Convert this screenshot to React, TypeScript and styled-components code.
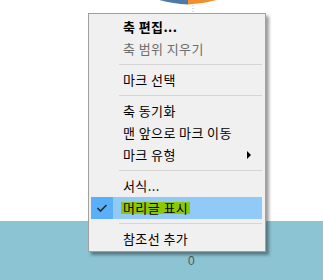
import React from "react";
import styled, { createGlobalStyle } from "styled-components";

const Global = createGlobalStyle`
  html, body { margin: 0; padding: 0; background: #ffffff; }
  body { font-family: "Noto Sans CJK KR", "Noto Sans", sans-serif; }
`;

const Page = styled.div`
  position: relative;
  width: 323px;
  height: 280px;
  overflow: hidden;
  display: flex;
  flex-direction: column;
`;

const ChartArea = styled.div`
  height: 221px;
  background: #ffffff;
`;

const Band = styled.div`
  flex: 1;
  background: #8cc4d3;
  padding: 33px 0 0 188px;
  font-family: "Liberation Sans", Arial, sans-serif;
  font-size: 12px;
  color: #555555;
  line-height: 14px;
`;

const Menu = styled.div`
  position: absolute;
  left: 88px;
  top: 13px;
  width: 178px;
  box-sizing: border-box;
  background: #f0f0f0;
  border: 1px solid #a0a0a0;
  padding: 2px 3px 1px 2px;
  box-shadow: 3px 3px 3px rgba(0, 0, 0, 0.38);
  display: flex;
  flex-direction: column;
`;

const Item = styled.div<{ $active?: boolean }>`
  height: 22px;
  display: flex;
  align-items: center;
  background: ${(p) => (p.$active ? "#91c9f7" : "transparent")};
`;

const CheckCell = styled.div<{ $active?: boolean }>`
  width: 22px;
  height: 22px;
  display: flex;
  align-items: center;
  justify-content: center;
  background: ${(p) => (p.$active ? "#5aaff9" : "transparent")};
`;

const Label = styled.span<{ $bold?: boolean; $disabled?: boolean; $mark?: boolean }>`
  margin-left: ${(p) => (p.$mark ? "8px" : "10px")};
  padding: ${(p) => (p.$mark ? "0 2px" : "0")};
  font-size: 13px;
  letter-spacing: 0.4px;
  line-height: 12px;
  height: 12px;
  display: inline-flex;
  align-items: center;
  white-space: nowrap;
  font-weight: ${(p) => (p.$bold ? 700 : 400)};
  color: ${(p) => (p.$disabled ? "#6d6d6d" : "#000000")};
  background: ${(p) => (p.$mark ? "#8fc800" : "transparent")};
  flex: 1;
  flex-grow: ${(p) => (p.$mark ? 0 : 1)};
`;

const Arrow = styled.span`
  width: 0;
  height: 0;
  border-top: 4px solid transparent;
  border-bottom: 4px solid transparent;
  border-left: 4px solid #000;
  margin-right: 11px;
`;

const Separator = styled.div`
  height: 9px;
  display: flex;
  align-items: center;
  padding-left: 28px;
  &::after {
    content: "";
    flex: 1;
    height: 1px;
    background: #d5d5d5;
  }
`;

const Check = () => (
  <svg width="12" height="10" viewBox="0 0 12 10">
    <polyline points="1.5,5 4.5,8 10.5,2" fill="none" stroke="#2b2b2b" strokeWidth="1.6" />
  </svg>
);

type Entry =
  | { kind: "sep" }
  | { kind: "item"; text: string; bold?: boolean; disabled?: boolean; sub?: boolean; checked?: boolean };

const entries: Entry[] = [
  { kind: "item", text: "축 편집...", bold: true },
  { kind: "item", text: "축 범위 지우기", disabled: true },
  { kind: "sep" },
  { kind: "item", text: "마크 선택" },
  { kind: "sep" },
  { kind: "item", text: "축 동기화" },
  { kind: "item", text: "맨 앞으로 마크 이동" },
  { kind: "item", text: "마크 유형", sub: true },
  { kind: "sep" },
  { kind: "item", text: "서식..." },
  { kind: "item", text: "머리글 표시", checked: true },
  { kind: "sep" },
  { kind: "item", text: "참조선 추가" },
];

const Pie = () => (
  <svg width="323" height="14" viewBox="0 0 323 14" style={{ display: "block" }}>
    <path d="M188,-119 L188,4.5 A123,123 0 0 1 150,-3 Z" fill="#4e79a7" />
    <path d="M188,-119 L188,4.5 A123,123 0 0 0 226,-3 Z" fill="#f28e2b" />
    <line x1="193" y1="5" x2="193" y2="13" stroke="#b0b0b0" strokeWidth="1" strokeDasharray="1 2" />
  </svg>
);

export default function App() {
  return (
    <>
      <Global />
      <Page>
        <ChartArea>
          <Pie />
        </ChartArea>
        <Band>0</Band>
        <Menu>
          {entries.map((e, i) =>
            e.kind === "sep" ? (
              <Separator key={i} />
            ) : (
              <Item key={i} $active={e.checked}>
                <CheckCell $active={e.checked}>{e.checked && <Check />}</CheckCell>
                <Label $bold={e.bold} $disabled={e.disabled} $mark={e.checked}>
                  {e.text}
                </Label>
                {e.sub && <Arrow />}
              </Item>
            )
          )}
        </Menu>
      </Page>
    </>
  );
}
